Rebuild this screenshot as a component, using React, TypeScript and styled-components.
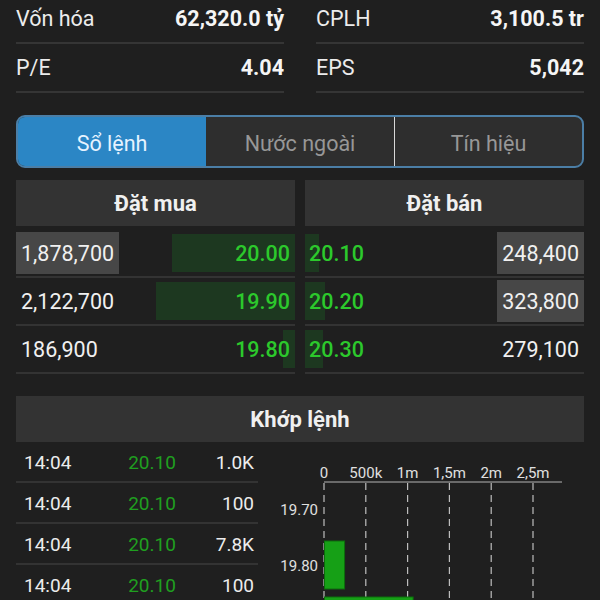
import React from "react";
import styled, { createGlobalStyle } from "styled-components";

const info = [
  { label: "Vốn hóa", value: "62,320.0 tỷ" },
  { label: "CPLH", value: "3,100.5 tr" },
  { label: "P/E", value: "4.04" },
  { label: "EPS", value: "5,042" },
];

const tabs = ["Sổ lệnh", "Nước ngoài", "Tín hiệu"];

const bids = [
  { qty: "1,878,700", price: "20.00", bar: 123, hot: true },
  { qty: "2,122,700", price: "19.90", bar: 139, hot: false },
  { qty: "186,900", price: "19.80", bar: 12, hot: false },
];

const asks = [
  { qty: "248,400", price: "20.10", bar: 14, hot: true },
  { qty: "323,800", price: "20.20", bar: 20, hot: true },
  { qty: "279,100", price: "20.30", bar: 18, hot: false },
];

const trades = [
  { time: "14:04", price: "20.10", vol: "1.0K" },
  { time: "14:04", price: "20.10", vol: "100" },
  { time: "14:04", price: "20.10", vol: "7.8K" },
  { time: "14:04", price: "20.10", vol: "100" },
];

// chart: x scale 41.8px per 500k, origin at x=66 (svg coords)
const ticks = ["0", "500k", "1m", "1,5m", "2m", "2,5m"];
const levels = [
  { price: "19.70", vol: 0 },
  { price: "19.80", vol: 240000 },
  { price: "19.90", vol: 1060000 },
];

export default function App() {
  return (
    <>
      <GlobalStyle />
      <Page>
        <InfoGrid>
          {info.map((i) => (
            <InfoRow key={i.label}>
              <span>{i.label}</span>
              <InfoValue>{i.value}</InfoValue>
            </InfoRow>
          ))}
        </InfoGrid>

        <Tabs>
          {tabs.map((t, idx) => (
            <Tab key={t} $active={idx === 0} $divider={idx === 2}>
              {t}
            </Tab>
          ))}
        </Tabs>

        <Book>
          <div>
            <BookHeader>Đặt mua</BookHeader>
            <BookRows>
              {bids.map((b) => (
                <BookRow key={b.price}>
                  <DepthBar $side="buy" style={{ width: b.bar }} />
                  <Qty $hot={b.hot}>{b.qty}</Qty>
                  <Price $side="buy">{b.price}</Price>
                </BookRow>
              ))}
            </BookRows>
          </div>
          <div>
            <BookHeader>Đặt bán</BookHeader>
            <BookRows>
              {asks.map((a) => (
                <BookRow key={a.price}>
                  <DepthBar $side="sell" style={{ width: a.bar }} />
                  <Price $side="sell">{a.price}</Price>
                  <Qty $hot={a.hot}>{a.qty}</Qty>
                </BookRow>
              ))}
            </BookRows>
          </div>
        </Book>

        <MatchHeader>Khớp lệnh</MatchHeader>
        <MatchBody>
          <TradeList>
            {trades.map((t, idx) => (
              <TradeRow key={idx}>
                <span>{t.time}</span>
                <TradePrice>{t.price}</TradePrice>
                <TradeVol>{t.vol}</TradeVol>
              </TradeRow>
            ))}
          </TradeList>
          <ChartBox>
            <ChartSvg width="326" height="158" viewBox="0 0 326 158">
              <line x1="66" y1="40" x2="304" y2="40" stroke="#b5b5b5" strokeWidth="1" />
              {ticks.map((t, i) => {
                const x = 66 + i * 41.8;
                return (
                  <g key={t}>
                    <text x={x} y="36" fill="#e0e0e0" fontSize="15" textAnchor="middle">
                      {t}
                    </text>
                    <line
                      x1={x}
                      y1="41"
                      x2={x}
                      y2="158"
                      stroke="#bdbdbd"
                      strokeWidth="1.2"
                      strokeDasharray="7 5"
                    />
                  </g>
                );
              })}
              {levels.map((l, i) => {
                const cy = 68 + i * 56;
                const w = (l.vol / 500000) * 41.8;
                return (
                  <g key={l.price}>
                    {cy < 150 && (
                      <text x="60" y={cy + 5} fill="#e0e0e0" fontSize="15" textAnchor="end">
                        {l.price}
                      </text>
                    )}
                    {w > 0 && (
                      <rect
                        x="66.5"
                        y={cy - 25}
                        width={w}
                        height="48"
                        fill="#16a016"
                        stroke="#0c6e0c"
                        strokeWidth="1"
                      />
                    )}
                  </g>
                );
              })}
            </ChartSvg>
          </ChartBox>
        </MatchBody>
      </Page>
    </>
  );
}

const GlobalStyle = createGlobalStyle`
  html, body {
    margin: 0;
    padding: 0;
    background: #1f1f1f;
    overflow: hidden;
  }
  body {
    font-family: Roboto, "Noto Sans", "Liberation Sans", sans-serif;
    color: #ededed;
  }
`;

const Page = styled.main`
  padding: 0 16px;
`;

const InfoGrid = styled.section`
  display: grid;
  grid-template-columns: 1fr 1fr;
  column-gap: 32px;
  margin-top: -5px;
`;

const InfoRow = styled.div`
  display: flex;
  justify-content: space-between;
  align-items: center;
  height: 47px;
  border-bottom: 2px solid #353535;
  font-size: 21.5px;
  color: #ececec;
`;

const InfoValue = styled.span`
  font-weight: 700;
  color: #f5f5f5;
`;

const Tabs = styled.nav`
  display: grid;
  grid-template-columns: repeat(3, 1fr);
  height: 53px;
  box-sizing: border-box;
  margin-top: 22px;
  border: 2px solid #4b7ea6;
  border-radius: 9px;
  overflow: hidden;
  background: #2e2e2e;
`;

const Tab = styled.div<{ $active?: boolean; $divider?: boolean }>`
  display: flex;
  align-items: center;
  justify-content: center;
  padding-top: 3px;
  font-size: 21.5px;
  color: ${(p) => (p.$active ? "#e6f3ff" : "#979797")};
  background: ${(p) => (p.$active ? "#2b86c5" : "transparent")};
  border-left: ${(p) => (p.$divider ? "1.5px solid #d8d8d8" : "none")};
`;

const Book = styled.section`
  display: grid;
  grid-template-columns: 1fr 1fr;
  column-gap: 10px;
  margin-top: 12px;
`;

const BookHeader = styled.div`
  height: 46px;
  display: flex;
  align-items: center;
  justify-content: center;
  background: #333333;
  font-size: 22px;
  font-weight: 700;
  color: #f0f0f0;
`;

const BookRows = styled.div`
  margin-top: 4px;
`;

const BookRow = styled.div`
  position: relative;
  display: flex;
  justify-content: space-between;
  align-items: center;
  height: 46px;
  border-bottom: 2px solid #333333;
  font-size: 21.5px;
`;

const DepthBar = styled.div<{ $side: "buy" | "sell" }>`
  position: absolute;
  top: 4px;
  bottom: 4px;
  ${(p) => (p.$side === "buy" ? "right: 0;" : "left: 0;")}
  background: #1d3820;
`;

const Qty = styled.span<{ $hot?: boolean }>`
  position: relative;
  height: 42px;
  display: flex;
  align-items: center;
  padding: 0 5px;
  color: #f0f0f0;
  background: ${(p) => (p.$hot ? "#474747" : "transparent")};
`;

const Price = styled.span<{ $side: "buy" | "sell" }>`
  position: relative;
  font-weight: 500;
  color: #2cc92c;
  ${(p) => (p.$side === "buy" ? "padding-right: 5px;" : "padding-left: 4px;")}
`;

const MatchHeader = styled.div`
  height: 46px;
  margin-top: 22px;
  display: flex;
  align-items: center;
  justify-content: center;
  background: #333333;
  font-size: 22px;
  font-weight: 700;
  color: #f0f0f0;
`;

const MatchBody = styled.section`
  display: flex;
  align-items: flex-start;
`;

const TradeList = styled.div`
  width: 242px;
  flex-shrink: 0;
`;

const TradeRow = styled.div`
  display: grid;
  grid-template-columns: 93px 70px 1fr;
  align-items: center;
  padding: 2px 4px 0 8px;
  box-sizing: border-box;
  height: 41px;
  border-bottom: 2px solid #333333;
  font-size: 19px;
  color: #ececec;
`;

const TradePrice = styled.span`
  text-align: center;
  color: #1f9f1f;
`;

const TradeVol = styled.span`
  text-align: right;
`;

const ChartBox = styled.div`
  flex: 1;
  font-family: Roboto, "Noto Sans", sans-serif;
`;

const ChartSvg = styled.svg`
  display: block;
`;
